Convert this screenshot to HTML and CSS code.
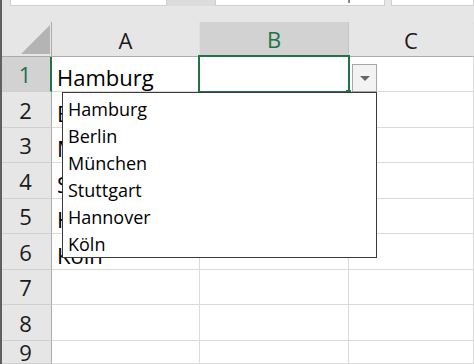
FILE: index.html
```html
<!DOCTYPE html>
<html lang="de">
<head>
<meta charset="utf-8">
<title>Dropdown</title>
<link rel="stylesheet" href="styles.css">
</head>
<body>
<div class="app">
  <div class="topbar">
    <div class="box box-name"></div>
    <div class="gap gap-dark"></div>
    <div class="box box-formula"><span class="mark"></span></div>
    <div class="gap"></div>
    <div class="box box-rest"></div>
  </div>
  <div class="sheet">
    <div class="corner"><span class="tri"></span></div>
    <div class="colhead">A</div>
    <div class="colhead sel">B</div>
    <div class="colhead">C</div>

    <div class="rowhead sel">1</div>
    <div class="cell">Hamburg</div>
    <div class="cell active"><span class="handle"></span></div>
    <div class="cell"></div>

    <div class="rowhead">2</div>
    <div class="cell">Berlin</div>
    <div class="cell"></div>
    <div class="cell"></div>

    <div class="rowhead">3</div>
    <div class="cell">München</div>
    <div class="cell"></div>
    <div class="cell"></div>

    <div class="rowhead">4</div>
    <div class="cell">Stuttgart</div>
    <div class="cell"></div>
    <div class="cell"></div>

    <div class="rowhead">5</div>
    <div class="cell">Hannover</div>
    <div class="cell"></div>
    <div class="cell"></div>

    <div class="rowhead">6</div>
    <div class="cell">Köln</div>
    <div class="cell"></div>
    <div class="cell"></div>

    <div class="rowhead">7</div>
    <div class="cell"></div>
    <div class="cell"></div>
    <div class="cell"></div>

    <div class="rowhead">8</div>
    <div class="cell"></div>
    <div class="cell"></div>
    <div class="cell"></div>

    <div class="rowhead">9</div>
    <div class="cell"></div>
    <div class="cell"></div>
    <div class="cell"></div>

    <div class="dropbtn"><span class="arrow"></span></div>
    <ul class="list">
      <li>Hamburg</li>
      <li>Berlin</li>
      <li>München</li>
      <li>Stuttgart</li>
      <li>Hannover</li>
      <li>Köln</li>
    </ul>
  </div>
</div>
</body>
</html>
```
FILE: styles.css
```css
* { box-sizing: border-box; }
html, body { margin: 0; padding: 0; }
body {
  width: 474px;
  height: 364px;
  overflow: hidden;
  background: #ffffff;
  font-family: "Open Sans", "Noto Sans", "Liberation Sans", sans-serif;
  color: #111;
}
.app {
  border-left: 2px solid #5f5f5f;
  height: 364px;
}
.topbar {
  height: 22px;
  background: #e6e6e6;
  display: flex;
  align-items: flex-start;
  padding-left: 8px;
}
.box {
  height: 6px;
  background: #ffffff;
  border: 1px solid #d0d0d0;
  border-top: none;
  position: relative;
}
.box-name { width: 157px; }
.gap { width: 6px; height: 6px; }
.gap-dark { width: 48px; background: #dcdcdc; }
.box-formula { width: 170px; }
.box-rest { flex: 1; }
.mark {
  position: absolute;
  left: 132px;
  top: 0;
  width: 2px;
  height: 3px;
  background: #888;
}
.sheet {
  position: relative;
  display: grid;
  grid-template-columns: 50px 148px 149px 125px;
  grid-template-rows: 35px 35px 36px 35px 36px 35px 36px 35px 36px 23px;
}
.corner {
  background: #e6e6e6;
  border-right: 1px solid #ababab;
  border-bottom: 1px solid #ababab;
  position: relative;
}
.tri {
  position: absolute;
  right: 1px;
  bottom: 2px;
  width: 0;
  height: 0;
  border-left: 29px solid transparent;
  border-bottom: 29px solid #b4b4b4;
}
.colhead {
  background: #e6e6e6;
  border-bottom: 1px solid #ababab;
  border-right: 1px solid #e0e0e0;
  display: flex;
  align-items: center;
  justify-content: center;
  font-size: 22px;
  color: #1a1a1a;
  padding-top: 1px;
}
.colhead.sel {
  background: #d2d2d2;
  color: #217346;
  border-bottom: 2px solid #217346;
  border-right: 1px solid #c4c4c4;
}
.rowhead {
  background: #e6e6e6;
  border-right: 1px solid #ababab;
  border-bottom: 1px solid #cfcfcf;
  display: flex;
  align-items: center;
  justify-content: center;
  font-size: 22px;
  color: #1a1a1a;
  padding-right: 2px;
}
.rowhead.sel {
  background: #d2d2d2;
  color: #217346;
  border-right: 2px solid #217346;
}
.cell {
  border-right: 1px solid #dadada;
  border-bottom: 1px solid #dadada;
  font-size: 22px;
  line-height: 28px;
  padding-left: 5px;
  display: flex;
  align-items: flex-end;
  color: #000;
  white-space: nowrap;
  overflow: hidden;
  position: relative;
}
.cell.active {
  overflow: visible;
}
.cell.active::after {
  content: "";
  position: absolute;
  left: -2px;
  top: -2px;
  right: -2px;
  bottom: -2px;
  border: 2px solid #217346;
}
.handle {
  position: absolute;
  right: -3px;
  bottom: -3px;
  width: 5px;
  height: 4px;
  background: #217346;
  z-index: 1;
}
.dropbtn {
  position: absolute;
  left: 350px;
  top: 42px;
  width: 25px;
  height: 28px;
  background: #f3f3f3;
  border: 1px solid #a6a6a6;
  display: flex;
  align-items: center;
  justify-content: center;
  z-index: 2;
}
.arrow {
  width: 0;
  height: 0;
  border-left: 5px solid transparent;
  border-right: 5px solid transparent;
  border-top: 5px solid #666;
}
.list {
  position: absolute;
  left: 60px;
  top: 70px;
  width: 315px;
  height: 166px;
  margin: 0;
  padding: 3px 0 0 0;
  list-style: none;
  background: #fff;
  border: 1px solid #3a3a3a;
  z-index: 3;
}
.list li {
  height: 27px;
  line-height: 27px;
  font-size: 18px;
  padding-left: 5px;
  color: #000;
}
```
